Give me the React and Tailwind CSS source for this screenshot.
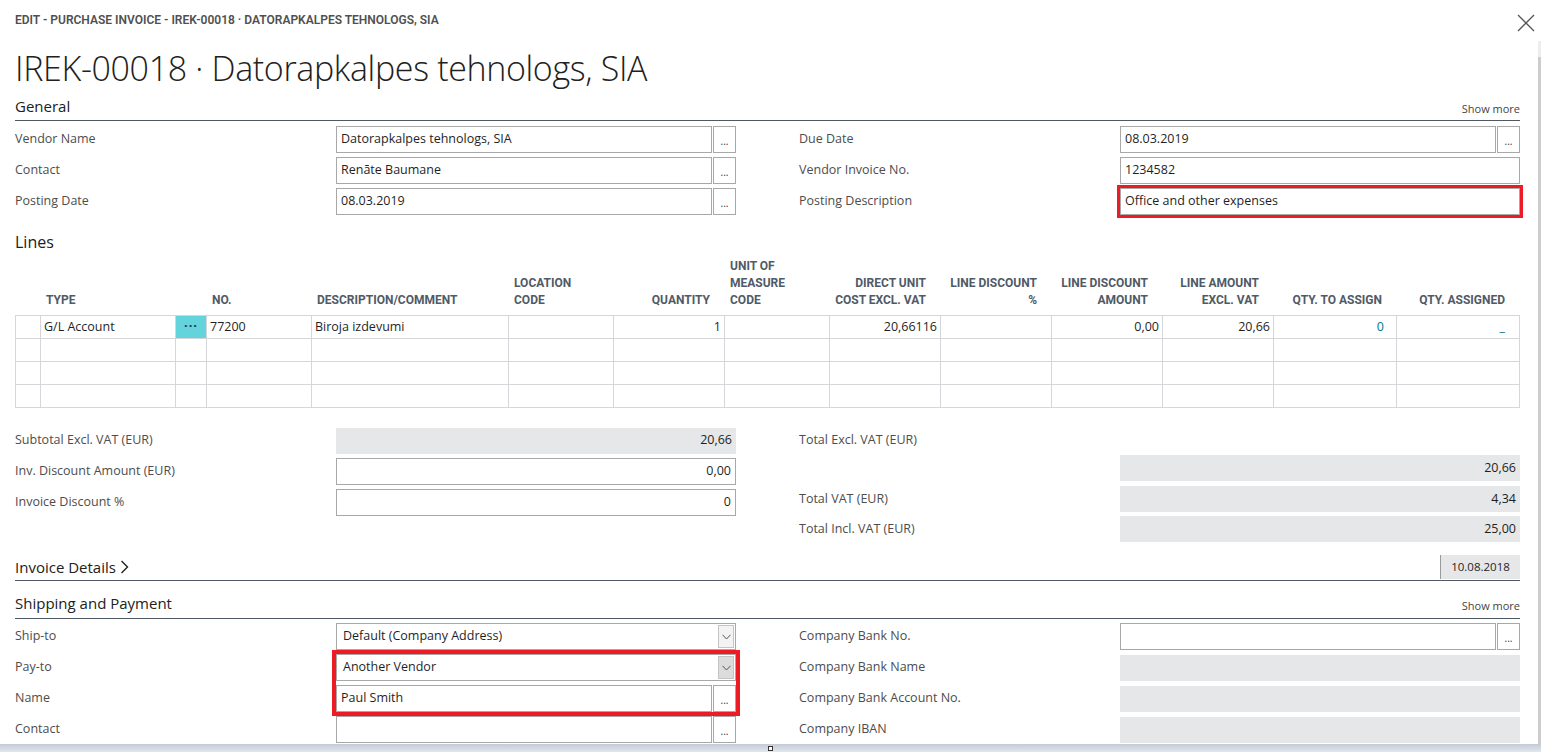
import React from 'react';

const cols = [
  { w: 25 },
  { w: 135, h: ['TYPE'] },
  { w: 31 },
  { w: 105, h: ['NO.'] },
  { w: 197, h: ['DESCRIPTION/COMMENT'] },
  { w: 105, h: ['LOCATION', 'CODE'] },
  { w: 111, h: ['QUANTITY'], r: true },
  { w: 105, h: ['UNIT OF', 'MEASURE', 'CODE'] },
  { w: 111, h: ['DIRECT UNIT', 'COST EXCL. VAT'], r: true },
  { w: 111, h: ['LINE DISCOUNT', '%'], r: true },
  { w: 111, h: ['LINE DISCOUNT', 'AMOUNT'], r: true },
  { w: 111, h: ['LINE AMOUNT', 'EXCL. VAT'], r: true },
  { w: 123, h: ['QTY. TO ASSIGN'], r: true },
  { w: 123, h: ['QTY. ASSIGNED'], r: true },
];

const firstLine = ['', 'G/L Account', 'dots', '77200', 'Biroja izdevumi', '', '1', '', '20,66116', '', '0,00', '20,66', '0', '_'];

function Label({ children }) {
  return <div className="w-[321px] shrink-0 text-[12.5px] text-[#4d4d4d]">{children}</div>;
}

function Dots() {
  return (
    <div className="flex w-[23px] shrink-0 items-center justify-center border border-[#a8a8a8] bg-white pt-[3px] text-[10px] leading-none text-[#333]">
      ...
    </div>
  );
}

function Input({ children, btn, right, className = '' }) {
  return (
    <div className="flex h-[27px] flex-1 gap-px">
      <div
        className={`flex min-w-0 flex-1 items-center border border-[#a8a8a8] bg-white px-[4px] text-[12.5px] text-[#1f1f1f] ${right ? 'justify-end' : ''} ${className}`}
      >
        {children}
      </div>
      {btn && <Dots />}
    </div>
  );
}

function Grey({ children }) {
  return (
    <div className="flex h-[26px] flex-1 items-center justify-end bg-[#e6e7e9] px-[4px] text-[12.5px] text-[#1f1f1f]">
      {children}
    </div>
  );
}

function Select({ children, dark }) {
  return (
    <div className="flex h-[27px] flex-1 items-center border border-[#a8a8a8] bg-white pl-[6px] text-[12.5px] text-[#1f1f1f]">
      <div className="flex-1">{children}</div>
      <div
        className={`m-px flex h-[23px] w-[16px] items-center justify-center border border-[#c4c4c4] ${dark ? 'bg-[#dcdcdc]' : 'bg-[#f3f3f3]'}`}
      >
        <svg width="9" height="6" viewBox="0 0 9 6" fill="none">
          <path d="M0.5 0.8 L4.5 5 L8.5 0.8" stroke="#555" strokeWidth="1" />
        </svg>
      </div>
    </div>
  );
}

function Row({ label, children }) {
  return (
    <div className="flex h-[27px] items-center">
      <Label>{label}</Label>
      <div className="flex flex-1">{children}</div>
    </div>
  );
}

function SectionHead({ title, more, pad = 'pb-[4px]' }) {
  return (
    <div className={`flex items-end justify-between border-b border-[#4f5964] ${pad}`}>
      <div className="text-[15px] leading-[20px] text-[#212121]">{title}</div>
      {more && <div className="text-[11px] leading-[14px] text-[#444]">Show more</div>}
    </div>
  );
}

export default function App() {
  return (
    <div className="flex h-[752px] w-[1541px] flex-col overflow-hidden bg-white font-['Open_Sans',sans-serif]">
      {/* dialog caption */}
      <div className="flex h-[41px] shrink-0 items-start justify-between pl-[15px] pr-[6px] pt-[13px]">
        <div className="font-['Roboto',sans-serif] text-[12px] font-semibold leading-[14px] text-[#505050]">
          EDIT - PURCHASE INVOICE - IREK-00018 · DATORAPKALPES TEHNOLOGS, SIA
        </div>
        <svg width="18" height="18" viewBox="0 0 18 18" fill="none" className="mt-[1px]">
          <path d="M1 1 L17 17 M17 1 L1 17" stroke="#555" strokeWidth="1.3" />
        </svg>
      </div>

      <div className="flex min-h-0 flex-1">
        <div className="min-w-0 flex-1 overflow-hidden pl-[15px] pr-[18px]">
          <h1 className="mt-[6px] text-[34px] font-light leading-[42px] tracking-[-0.35px] text-[#212121]">
            IREK-00018 · Datorapkalpes tehnologs, SIA
          </h1>

          {/* General */}
          <div className="mt-[7px]">
            <SectionHead title="General" more />
          </div>
          <div className="mt-[5px] grid grid-cols-2 gap-x-[63px]">
            <div className="flex flex-col gap-[4px]">
              <Row label="Vendor Name">
                <Input btn>Datorapkalpes tehnologs, SIA</Input>
              </Row>
              <Row label="Contact">
                <Input btn>Renāte Baumane</Input>
              </Row>
              <Row label="Posting Date">
                <Input btn>08.03.2019</Input>
              </Row>
            </div>
            <div className="flex flex-col gap-[4px]">
              <Row label="Due Date">
                <Input btn>08.03.2019</Input>
              </Row>
              <Row label="Vendor Invoice No.">
                <Input>1234582</Input>
              </Row>
              <Row label="Posting Description">
                <Input className="outline-[3px] outline-solid outline-[#ed1c24]">Office and other expenses</Input>
              </Row>
            </div>
          </div>

          {/* Lines */}
          <div className="mt-[16px] text-[16px] leading-[22px] text-[#212121]">Lines</div>
          <div className="mt-[4px] grid grid-cols-[25px_135px_31px_105px_197px_105px_111px_105px_111px_111px_111px_111px_123px_123px]">
            {cols.map((c, i) => (
              <div
                key={i}
                className={`flex h-[58px] flex-col justify-end pb-[6px] font-['Roboto',sans-serif] text-[12px] font-bold leading-[17px] text-[#505a66] ${c.r ? 'items-end pr-[14px]' : 'pl-[6px]'}`}
              >
                {(c.h || []).map((t) => (
                  <div key={t}>{t}</div>
                ))}
              </div>
            ))}
          </div>
          <div className="grid grid-cols-[25px_135px_31px_105px_197px_105px_111px_105px_111px_111px_111px_111px_123px_123px] border-l border-t border-[#d5d6da]">
            {[0, 1, 2, 3].map((r) =>
              cols.map((c, i) => {
                const v = r === 0 ? firstLine[i] : '';
                if (v === 'dots') {
                  return (
                    <div
                      key={`${r}-${i}`}
                      className="flex h-[23px] items-center justify-center border-b border-r border-[#d5d6da] bg-[#64d4dc] pb-[2px] text-[13px] font-bold tracking-[1px] text-[#2b3a44]"
                    >
                      ···
                    </div>
                  );
                }
                const teal = r === 0 && (i === 12 || i === 13);
                return (
                  <div
                    key={`${r}-${i}`}
                    className={`flex h-[23px] items-center border-b border-r border-[#d5d6da] text-[12.5px] ${c.r ? 'justify-end' : ''} ${teal ? 'text-[#00788a]' : 'text-[#1f1f1f]'} ${i === 12 ? 'pr-[12px]' : i === 13 ? 'pr-[14px]' : 'px-[3px]'}`}
                  >
                    {v}
                  </div>
                );
              })
            )}
          </div>

          {/* Totals */}
          <div className="mt-[19px] grid grid-cols-2 gap-x-[63px]">
            <div className="flex flex-col gap-[4px]">
              <Row label="Subtotal Excl. VAT (EUR)">
                <Grey>20,66</Grey>
              </Row>
              <Row label="Inv. Discount Amount (EUR)">
                <Input right>0,00</Input>
              </Row>
              <Row label="Invoice Discount %">
                <Input right>0</Input>
              </Row>
            </div>
            <div className="flex flex-col">
              <Row label="Total Excl. VAT (EUR)">
                <div />
              </Row>
              <div className="mt-px flex h-[26px]">
                <Label />
                <Grey>20,66</Grey>
              </div>
              <div className="mt-[5px] flex h-[26px] items-center">
                <Label>Total VAT (EUR)</Label>
                <Grey>4,34</Grey>
              </div>
              <div className="mt-[4px] flex h-[26px] items-center">
                <Label>Total Incl. VAT (EUR)</Label>
                <Grey>25,00</Grey>
              </div>
            </div>
          </div>

          {/* Invoice Details */}
          <div className="mt-[11px] flex h-[28px] items-center justify-between border-b border-[#4f5964]">
            <div className="flex items-center gap-[4px] text-[15px] leading-[20px] text-[#212121]">
              Invoice Details
              <svg width="9" height="14" viewBox="0 0 9 14" fill="none">
                <path d="M1.5 1 L7.5 7 L1.5 13" stroke="#222" strokeWidth="1.4" />
              </svg>
            </div>
            <div className="flex h-[24px] w-[80px] items-center justify-center border-l border-[#9a9a9a] bg-[#e6e7e9] text-[11.5px] text-[#1f1f1f]">
              10.08.2018
            </div>
          </div>

          {/* Shipping and Payment */}
          <div className="mt-[12px]">
            <SectionHead title="Shipping and Payment" more pad="pb-[5px]" />
          </div>
          <div className="mt-[4px] grid grid-cols-2 gap-x-[63px]">
            <div className="flex">
              <div className="flex flex-col gap-[4px]">
                {['Ship-to', 'Pay-to', 'Name', 'Contact'].map((l) => (
                  <div key={l} className="flex h-[27px] items-center">
                    <Label>{l}</Label>
                  </div>
                ))}
              </div>
              <div className="flex flex-1 flex-col gap-[4px]">
                <div className="flex h-[27px]">
                  <Select>Default (Company Address)</Select>
                </div>
                <div className="flex flex-col gap-[4px] outline-[4px] outline-solid outline-[#ed1c24]">
                  <div className="flex h-[27px]">
                    <Select dark>Another Vendor</Select>
                  </div>
                  <div className="flex h-[27px]">
                    <Input btn>Paul Smith</Input>
                  </div>
                </div>
                <div className="flex h-[27px]">
                  <Input btn />
                </div>
              </div>
            </div>
            <div className="flex flex-col gap-[4px]">
              <Row label="Company Bank No.">
                <Input btn />
              </Row>
              <Row label="Company Bank Name">
                <Grey />
              </Row>
              <Row label="Company Bank Account No.">
                <Grey />
              </Row>
              <Row label="Company IBAN">
                <Grey />
              </Row>
            </div>
          </div>
        </div>

        {/* vertical scrollbar */}
        <div className="flex w-[3px] shrink-0 flex-col">
          <div className="h-[16px] bg-[#ededed]" />
          <div className="flex-1 bg-[#cdcdcd]" />
        </div>
      </div>

      {/* bottom edge */}
      <div className="flex h-[8px] shrink-0 items-center justify-center bg-gradient-to-b from-[#c3cbd7] to-[#e2e6ec]">
        <div className="h-[5px] w-[5px] border border-[#333] bg-white" />
      </div>
    </div>
  );
}
